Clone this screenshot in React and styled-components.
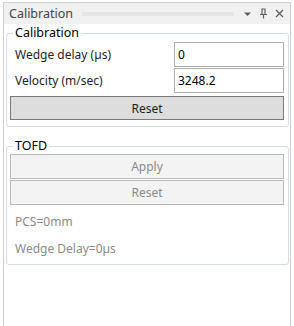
import React from 'react';
import styled, { createGlobalStyle } from 'styled-components';

const GlobalStyle = createGlobalStyle`
  html, body {
    margin: 0;
    padding: 0;
    background: #ffffff;
  }
  body {
    font-family: "Noto Sans", "Liberation Sans", sans-serif;
    font-size: 12px;
    color: #1e1e1e;
  }
`;

const Page = styled.div`
  padding: 2px 3px 0 3px;
  width: 294px;
  height: 326px;
  box-sizing: border-box;
`;

const Panel = styled.div`
  width: 288px;
  height: 324px;
  box-sizing: border-box;
  border: 1px solid #cfcfcf;
  border-bottom: none;
  display: flex;
  flex-direction: column;
`;

const TitleBar = styled.div`
  height: 21px;
  background: #f0f0f0;
  display: flex;
  align-items: center;
  padding: 0 6px 0 5px;
  gap: 9px;
`;

const TitleText = styled.span`
  font-size: 12.5px;
  color: #444;
  line-height: 21px;
`;

const Grip = styled.div`
  flex: 1;
  height: 4px;
  margin-top: 1px;
  background-image: radial-gradient(circle, #cdcdcd 0.5px, transparent 0.8px);
  background-size: 2px 2px;
`;

const TitleButtons = styled.div`
  display: flex;
  align-items: center;
  gap: 7px;
  color: #5f5f5f;
`;

const Content = styled.div`
  flex: 1;
  padding: 1px 1px 0 2px;
  display: flex;
  flex-direction: column;
  gap: 11px;
`;

const Group = styled.fieldset`
  margin: 0;
  border: 1px solid #d4dde4;
  border-radius: 3px;
  padding: ${p => p.$pad || '1px 4px 6px 3px'};
  display: flex;
  flex-direction: column;
  gap: ${p => p.$gap || 0}px;
`;

const Legend = styled.legend`
  padding: 0 2px;
  margin-left: 3px;
  font-size: 12.5px;
  color: #000;
  line-height: 16px;
`;

const FieldRow = styled.div`
  display: grid;
  grid-template-columns: 1fr 110px;
  align-items: center;
  height: 25px;
`;

const Label = styled.span`
  padding-left: 5px;
  font-size: 12px;
  color: #1e1e1e;
`;

const Input = styled.input`
  box-sizing: border-box;
  width: 110px;
  height: 25px;
  border: 1px solid #b0b0b0;
  padding: 0 3px;
  font-family: inherit;
  font-size: 12px;
  color: #000;
  outline: none;
`;

const Button = styled.button`
  box-sizing: border-box;
  height: ${p => p.$h || 24}px;
  width: 100%;
  border: 1px solid ${p => (p.disabled ? '#b9b9b9' : '#7a7a7a')};
  background: ${p => (p.disabled ? '#f3f3f3' : '#dddddd')};
  color: ${p => (p.disabled ? '#8a8a8a' : '#1e1e1e')};
  font-family: inherit;
  font-size: 12px;
  padding: 0;
  margin: ${p => p.$mt || 0}px 0 0 0;
`;

const ButtonStack = styled.div`
  display: flex;
  flex-direction: column;
  gap: 1px;
`;

const Info = styled.div`
  padding-left: 5px;
  height: 27px;
  line-height: 27px;
  font-size: 12px;
  color: #8a8a8a;
`;

const InfoList = styled.div`
  display: flex;
  flex-direction: column;
  margin-top: 3px;
`;

function DropIcon() {
  return (
    <svg width="9" height="6" viewBox="0 0 9 6">
      <path d="M1 1.5 H8 L4.5 5 Z" fill="currentColor" />
    </svg>
  );
}

function PinIcon() {
  return (
    <svg width="9" height="11" viewBox="0 0 9 11">
      <path d="M2.5 1 H6.5 M3 1 V6 M6 1 V6 M1 6.5 H8 M4.5 6.5 V10.5" stroke="currentColor" strokeWidth="1.2" fill="none" />
    </svg>
  );
}

function CloseIcon() {
  return (
    <svg width="9" height="9" viewBox="0 0 9 9">
      <path d="M1 1 L8 8 M8 1 L1 8" stroke="currentColor" strokeWidth="1.3" />
    </svg>
  );
}

export default function App() {
  return (
    <Page>
      <GlobalStyle />
      <Panel>
        <TitleBar>
          <TitleText>Calibration</TitleText>
          <Grip />
          <TitleButtons>
            <DropIcon />
            <PinIcon />
            <CloseIcon />
          </TitleButtons>
        </TitleBar>
        <Content>
          <Group $gap={1}>
            <Legend>Calibration</Legend>
            <FieldRow>
              <Label>Wedge delay (µs)</Label>
              <Input defaultValue="0" />
            </FieldRow>
            <FieldRow>
              <Label>Velocity (m/sec)</Label>
              <Input defaultValue="3248.2" />
            </FieldRow>
            <Button $h={24} $mt={2}>Reset</Button>
          </Group>
          <Group $pad="0 4px 2px 3px">
            <Legend>TOFD</Legend>
            <ButtonStack>
              <Button disabled $h={25}>Apply</Button>
              <Button disabled $h={25}>Reset</Button>
            </ButtonStack>
            <InfoList>
              <Info>PCS=0mm</Info>
              <Info>Wedge Delay=0µs</Info>
            </InfoList>
          </Group>
        </Content>
      </Panel>
    </Page>
  );
}
